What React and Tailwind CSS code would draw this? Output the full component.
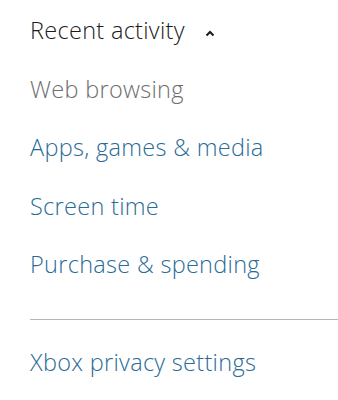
export default function App() {
  const links = ["Apps, games & media", "Screen time", "Purchase & spending"];
  const t = "text-[23.5px] leading-[30px] font-light tracking-[0.3px]";
  return (
    <div className="w-[338px] h-[400px] bg-white overflow-hidden" style={{ fontFamily: '"Open Sans", sans-serif' }}>
      <div className="pl-[30px] pt-[15px] flex flex-col">
        <div className="flex items-center h-[30px]">
          <span className={`${t} text-[#1a1a1a]`}>Recent activity</span>
          <svg className="ml-[20px] mt-[6px]" width="10" height="7" viewBox="0 0 10 7">
            <path d="M1.5 5.5 L5 2 L8.5 5.5" fill="none" stroke="#1a1a1a" strokeWidth="2" />
          </svg>
        </div>
        <div className={`mt-[28.5px] ${t} text-[#6e6e6e]`}>Web browsing</div>
        {links.map((x) => (
          <div key={x} className={`mt-[28.5px] ${t} text-[#296b96]`}>{x}</div>
        ))}
        <div className="mt-[40px] h-px bg-[#b5b5b5]" />
        <div className={`mt-[27px] ${t} text-[#296b96]`}>Xbox privacy settings</div>
      </div>
    </div>
  );
}
